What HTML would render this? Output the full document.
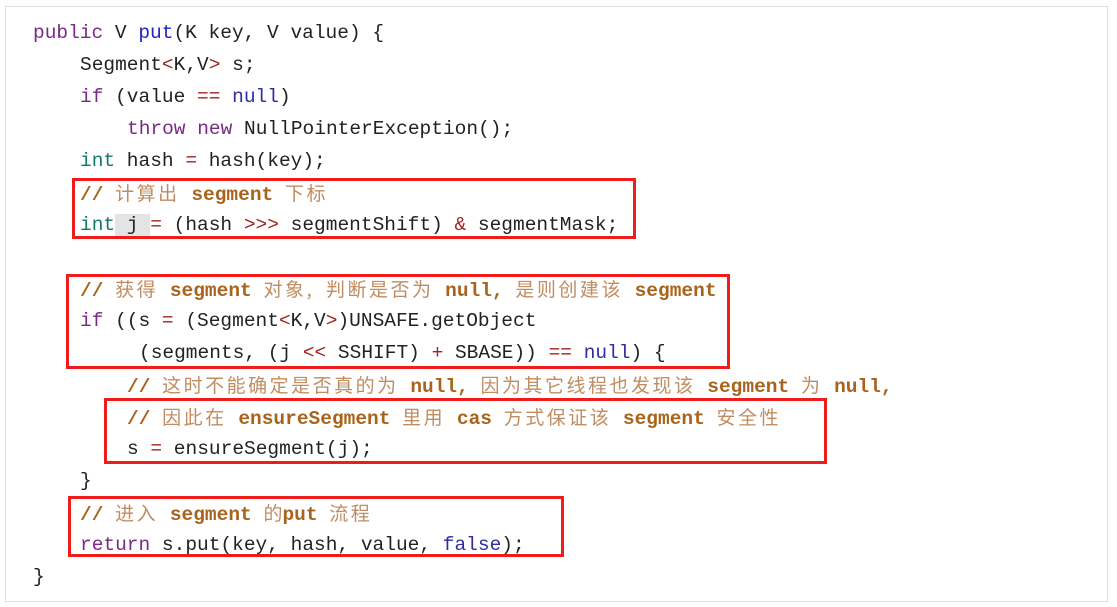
<!DOCTYPE html>
<html><head><meta charset="utf-8"><style>
html,body{margin:0;padding:0;background:#fff;width:1117px;height:607px;overflow:hidden}
.box{position:absolute;left:5px;top:6px;width:1101px;height:594px;border:1px solid #ddd;background:#fff}
.l{position:absolute;white-space:pre;font-family:"Liberation Mono",monospace;font-size:19.5px;line-height:32px;color:#222;height:32px}
.c{color:#a8641c;font-weight:bold}
.z{font-family:"Noto Sans CJK SC",sans-serif;font-size:19px;letter-spacing:2.5px;font-weight:normal;color:#c08d62}
.k{color:#7a2a85}
.t{color:#127a6d}
.n{color:#2d2d9e}
.o{color:#a3211f}
.f{color:#2222c8}
.r{position:absolute;border:3px solid #f01c1c;box-sizing:border-box}
.sel{background:#e4e4e4}
</style></head><body>
<div class="box"></div>
<div class="l" style="left:33px;top:17px"><span class="k">public</span> V <span class="f">put</span>(K key, V value) {</div>
<div class="l" style="left:80px;top:49px">Segment<span class="o">&lt;</span>K,V<span class="o">&gt;</span> s;</div>
<div class="l" style="left:80px;top:81px"><span class="k">if</span> (value <span class="o">==</span> <span class="n">null</span>)</div>
<div class="l" style="left:127px;top:113px"><span class="k">throw</span> <span class="k">new</span> NullPointerException();</div>
<div class="l" style="left:80px;top:145px"><span class="t">int</span> hash <span class="o">=</span> hash(key);</div>
<div class="l c" style="left:80px;top:177px">// <span class="z">计算出</span> segment <span class="z">下标</span></div>
<div class="l" style="left:80px;top:209px"><span class="t">int</span><span class="sel"> j </span><span class="o">=</span> (hash <span class="o">&gt;&gt;&gt;</span> segmentShift) <span class="o">&amp;</span> segmentMask;</div>
<div class="l c" style="left:80px;top:273px">// <span class="z">获得</span> segment <span class="z">对象,</span> <span class="z">判断是否为</span> null, <span class="z">是则创建该</span> segment</div>
<div class="l" style="left:80px;top:305px"><span class="k">if</span> ((s <span class="o">=</span> (Segment<span class="o">&lt;</span>K,V<span class="o">&gt;</span>)UNSAFE.getObject</div>
<div class="l" style="left:139px;top:337px">(segments, (j <span class="o">&lt;&lt;</span> SSHIFT) <span class="o">+</span> SBASE)) <span class="o">==</span> <span class="n">null</span>) {</div>
<div class="l c" style="left:127px;top:369px">// <span class="z">这时不能确定是否真的为</span> null, <span class="z">因为其它线程也发现该</span> segment <span class="z">为</span> null,</div>
<div class="l c" style="left:127px;top:401px">// <span class="z">因此在</span> ensureSegment <span class="z">里用</span> cas <span class="z">方式保证该</span> segment <span class="z">安全性</span></div>
<div class="l" style="left:127px;top:433px">s <span class="o">=</span> ensureSegment(j);</div>
<div class="l" style="left:80px;top:465px">}</div>
<div class="l c" style="left:80px;top:497px">// <span class="z">进入</span> segment <span class="z" style="letter-spacing:0">的</span>put <span class="z">流程</span></div>
<div class="l" style="left:80px;top:529px"><span class="k">return</span> s.put(key, hash, value, <span class="n">false</span>);</div>
<div class="l" style="left:33px;top:561px">}</div>
<div class="r" style="left:72px;top:178px;width:564px;height:61px"></div>
<div class="r" style="left:66px;top:274px;width:664px;height:95px"></div>
<div class="r" style="left:104px;top:398px;width:723px;height:66px"></div>
<div class="r" style="left:68px;top:496px;width:496px;height:61px"></div>
</body></html>
